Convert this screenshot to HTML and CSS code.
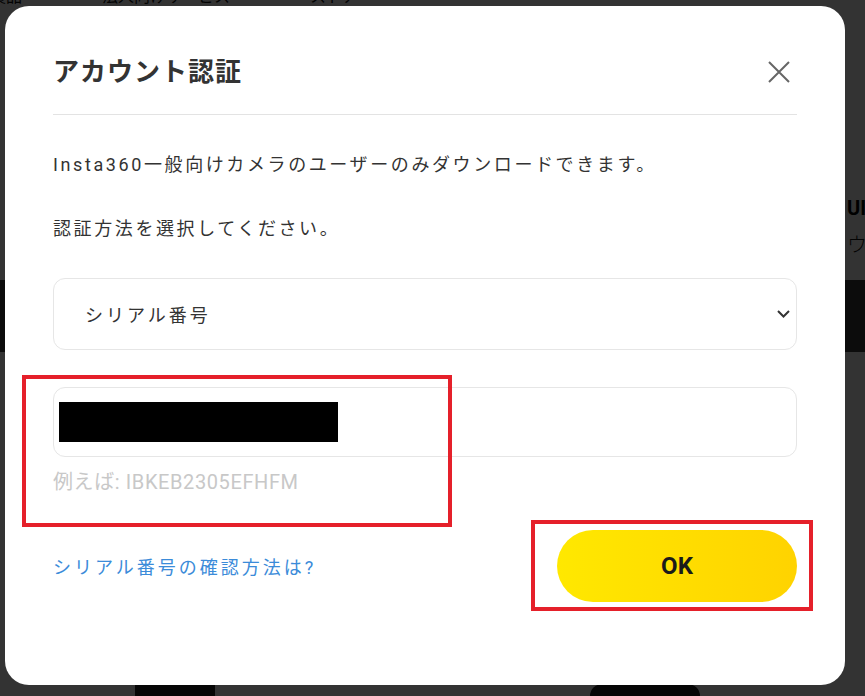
FILE: index.html
```html
<!DOCTYPE html>
<html lang="ja">
<head>
  <meta charset="UTF-8">
  <meta name="viewport" content="width=device-width, initial-scale=1.0">
  <title>アカウント認証</title>
  <link rel="stylesheet" href="styles.css">
</head>
<body>

  <div class="page">
    <nav class="site-nav">
      <span>製品</span>
      <span>法人向けサービス</span>
      <span>ストア</span>
    </nav>
    <section class="hero">
      <h2>UI</h2>
      <p>ウ</p>
    </section>
    <section class="band"></section>
    <section class="products">
      <div class="product product-a"></div>
      <div class="product product-b"></div>
    </section>
  </div>

  <div class="overlay">
    <div class="modal">
      <div class="modal-header">
        <h1>アカウント認証</h1>
        <button class="close-btn" aria-label="閉じる">
          <svg width="22" height="22" viewBox="0 0 22 22">
            <path d="M1 1 L21 21 M21 1 L1 21" stroke="#666" stroke-width="2" fill="none"/>
          </svg>
        </button>
      </div>

      <p class="modal-text">Insta360一般向けカメラのユーザーのみダウンロードできます。</p>
      <p class="modal-text">認証方法を選択してください。</p>

      <div class="select-box">
        <span>シリアル番号</span>
        <svg width="13" height="8" viewBox="0 0 13 8">
          <path d="M1 1 L6.5 6.5 L12 1" stroke="#333" stroke-width="2" fill="none"/>
        </svg>
      </div>

      <div class="serial-input">
        <span class="redacted"></span>
      </div>
      <p class="hint">例えば: IBKEB2305EFHFM</p>

      <div class="modal-footer">
        <a class="help-link" href="#">シリアル番号の確認方法は?</a>
        <button class="ok-btn">OK</button>
      </div>

      <!-- red annotation frames -->
      <div class="mark mark-input"></div>
      <div class="mark mark-ok"></div>
    </div>
  </div>

</body>
</html>
```

FILE: styles.css
```css
body {
  font-family: Roboto, "Noto Sans CJK JP", sans-serif;
  background-color: #fff;
  color: #222;
  margin: 0;
  padding: 0;
  height: 696px;
  overflow: hidden;
}

/* page behind the dialog */
.site-nav {
  display: flex;
  gap: 80px;
  margin: -12px 0 0 -10px;
  height: 18px;
  font-size: 16px;
  line-height: 18px;
  color: #111;
}

.hero {
  height: 274px;
  box-sizing: border-box;
  padding: 188px 0 0 847px;
  white-space: nowrap;
}

.hero h2 {
  margin: 0;
  font-size: 20px;
  line-height: 28px;
  font-weight: 700;
  color: #000;
}

.hero p {
  margin: 10px 0 0;
  font-size: 20px;
  line-height: 26px;
  font-weight: 300;
  color: #111;
}

.band {
  height: 72px;
  background-color: #3c3c3c;
}

.products {
  display: flex;
  align-items: flex-start;
  padding: 332px 0 0 135px;
  gap: 375px;
}

.product {
  height: 24px;
  background-color: #222;
}

.product-a {
  width: 80px;
}

.product-b {
  width: 110px;
  border-radius: 12px 12px 0 0;
}

/* dialog */
.overlay {
  position: fixed;
  inset: 0;
  background-color: rgba(0, 0, 0, 0.8);
  padding: 6px 0 0 5px;
}

.modal {
  position: relative;
  width: 840px;
  height: 679px;
  box-sizing: border-box;
  background-color: #fff;
  border-radius: 24px;
  padding: 0 48px;
}

.modal-header {
  display: flex;
  align-items: center;
  justify-content: space-between;
  padding: 48px 0 24px;
  border-bottom: 1px solid #e3e3e3;
}

.modal-header h1 {
  margin: 0;
  font-size: 26px;
  line-height: 36px;
  font-weight: 700;
  letter-spacing: 1px;
  color: #333;
}

.close-btn {
  width: 22px;
  height: 22px;
  padding: 0;
  margin-right: 7px;
  border: none;
  background: none;
  cursor: pointer;
}

.close-btn svg {
  display: block;
}

.modal-text {
  margin: 36px 0 0;
  font-size: 18px;
  line-height: 28px;
  letter-spacing: 2.6px;
  color: #333;
}

.select-box {
  display: flex;
  align-items: center;
  justify-content: space-between;
  margin-top: 35px;
  height: 72px;
  box-sizing: border-box;
  padding: 0 6px 0 31px;
  border: 1px solid #e6e6e6;
  border-radius: 12px;
  font-size: 18px;
  letter-spacing: 3px;
  color: #333;
}

.serial-input {
  display: flex;
  align-items: center;
  margin-top: 37px;
  height: 70px;
  box-sizing: border-box;
  padding-left: 5px;
  border: 1px solid #e6e6e6;
  border-radius: 12px;
}

.redacted {
  width: 279px;
  height: 40px;
  background-color: #000;
}

.hint {
  margin: 13px 0 0;
  font-size: 20px;
  line-height: 24px;
  letter-spacing: 0.6px;
  color: #c8c8c8;
}

.modal-footer {
  display: flex;
  align-items: center;
  justify-content: space-between;
  margin-top: 36px;
}

.help-link {
  font-size: 18px;
  letter-spacing: 3px;
  color: #3b8bd9;
  text-decoration: none;
}

.ok-btn {
  width: 240px;
  height: 72px;
  border: none;
  border-radius: 36px;
  background: linear-gradient(90deg, #ffe800, #ffd300);
  font-family: Roboto, sans-serif;
  font-size: 24px;
  font-weight: 700;
  color: #1a1a1a;
  cursor: pointer;
}

.mark {
  position: absolute;
  box-sizing: border-box;
  border: 4px solid #e5202a;
}

.mark-input {
  left: 17px;
  top: 369px;
  width: 430px;
  height: 152px;
}

.mark-ok {
  left: 526px;
  top: 514px;
  width: 282px;
  height: 91px;
}
```
